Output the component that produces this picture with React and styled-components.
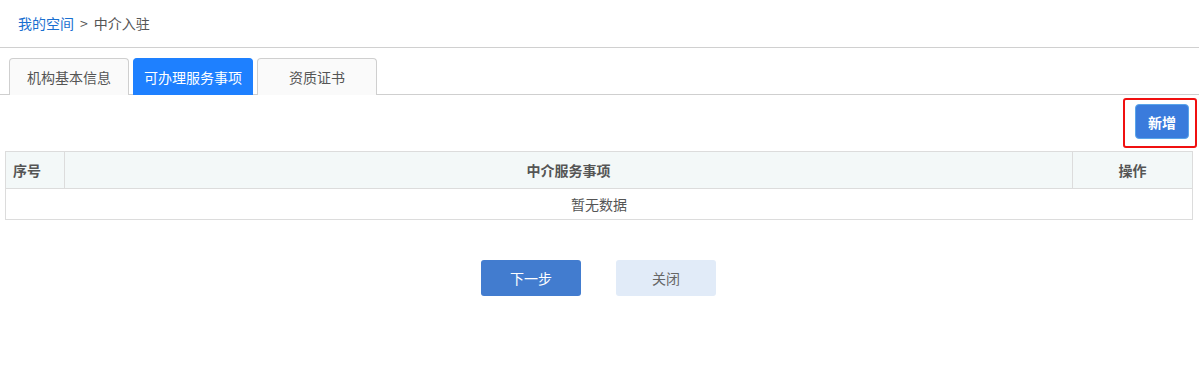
import React from "react";
import styled, { createGlobalStyle } from "styled-components";

const Global = createGlobalStyle`
  html, body { margin: 0; padding: 0; background: #fff; }
  body { font-family: "Noto Sans CJK SC", "Microsoft YaHei", "Noto Sans", sans-serif; font-size: 14px; color: #555; }
  * { box-sizing: border-box; }
`;

const Page = styled.div`
  width: 1199px;
  height: 368px;
  background: #fff;
`;

const Breadcrumb = styled.div`
  height: 48px;
  padding: 0 0 2px 18px;
  display: flex;
  align-items: center;
  border-bottom: 1px solid #d0d0d0;
  font-size: 14px;
  color: #555;
  gap: 6px;
`;

const Crumb = styled.a`
  color: ${(p) => (p.$link ? "#1a6fd0" : "#555")};
  text-decoration: none;
`;

const TabBar = styled.div`
  display: flex;
  gap: 4px;
  padding: 10px 0 0 9px;
  border-bottom: 1px solid #cfcfcf;
`;

const Tab = styled.div`
  width: 120px;
  height: 37px;
  display: flex;
  align-items: center;
  justify-content: center;
  border-radius: 4px 4px 0 0;
  font-size: 14px;
  border: 1px solid ${(p) => (p.$active ? "#1e80ff" : "#cfcfcf")};
  border-bottom: none;
  background: ${(p) => (p.$active ? "#1e80ff" : "#fafafa")};
  color: ${(p) => (p.$active ? "#fff" : "#555")};
  margin-bottom: -1px;
`;

const Toolbar = styled.div`
  display: flex;
  justify-content: flex-end;
  padding: 9px 10px 12px 0;
`;

const Highlight = styled.div`
  position: relative;
`;

const Marker = styled.span`
  position: absolute;
  top: -6px;
  left: -12px;
  right: -8px;
  bottom: -9px;
  border: 2px solid #f01010;
  border-radius: 3px;
  pointer-events: none;
`;

const AddButton = styled.button`
  width: 54px;
  height: 35px;
  border: 1px solid #5aa5ea;
  border-radius: 4px;
  background: #3a7bdc;
  color: #fff;
  font-family: inherit;
  font-size: 14px;
  font-weight: bold;
  cursor: pointer;
`;

const Table = styled.table`
  width: 1188px;
  margin: 0 0 0 5px;
  border-collapse: collapse;
  font-size: 14px;
`;

const Th = styled.th`
  height: 37px;
  background: #f3f8f8;
  border: 1px solid #dcdcdc;
  font-weight: bold;
  color: #555;
  text-align: ${(p) => p.$align || "center"};
  padding: ${(p) => (p.$align === "left" ? "0 0 0 7px" : "0")};
  width: ${(p) => p.$w || "auto"};
`;

const Td = styled.td`
  height: 31px;
  border: 1px solid #dcdcdc;
  text-align: center;
  color: #555;
  font-size: 14px;
  padding: 0;
`;

const Actions = styled.div`
  display: flex;
  justify-content: center;
  gap: 35px;
  margin-top: 40px;
  padding-right: 2px;
`;

const ActionButton = styled.button`
  width: 100px;
  height: 36px;
  border: none;
  border-radius: 3px;
  font-family: inherit;
  font-size: 14px;
  background: ${(p) => (p.$primary ? "#427ccf" : "#e1ebf8")};
  color: ${(p) => (p.$primary ? "#fff" : "#666")};
  cursor: pointer;
`;

export default function App() {
  return (
    <Page>
      <Global />
      <Breadcrumb>
        <Crumb $link href="#">我的空间</Crumb>
        <span>&gt;</span>
        <Crumb>中介入驻</Crumb>
      </Breadcrumb>
      <TabBar>
        <Tab>机构基本信息</Tab>
        <Tab $active>可办理服务事项</Tab>
        <Tab>资质证书</Tab>
      </TabBar>
      <Toolbar>
        <Highlight>
          <AddButton>新增</AddButton>
          <Marker />
        </Highlight>
      </Toolbar>
      <Table>
        <thead>
          <tr>
            <Th $w="59px" $align="left">序号</Th>
            <Th>中介服务事项</Th>
            <Th $w="120px">操作</Th>
          </tr>
        </thead>
        <tbody>
          <tr>
            <Td colSpan={3}>暂无数据</Td>
          </tr>
        </tbody>
      </Table>
      <Actions>
        <ActionButton $primary>下一步</ActionButton>
        <ActionButton>关闭</ActionButton>
      </Actions>
    </Page>
  );
}
